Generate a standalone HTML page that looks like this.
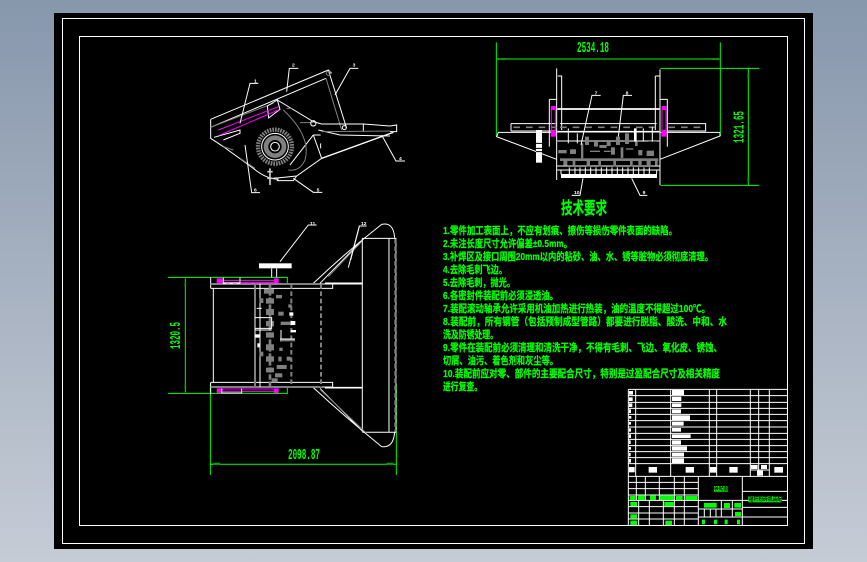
<!DOCTYPE html>
<html lang="zh">
<head>
<meta charset="utf-8">
<title>装配图</title>
<style>
html,body{margin:0;padding:0;width:867px;height:562px;overflow:hidden;background:linear-gradient(#8797ac,#c6ccd6)}
svg{position:absolute;left:0;top:0;display:block}
.w{fill:none;stroke:#fff;stroke-width:3}
.g{fill:none;stroke:#808080;stroke-width:3}
.gt{fill:none;stroke:#808080;stroke-width:6;stroke-dasharray:14 8}
.m{fill:none;stroke:#f0f;stroke-width:3}
.n{fill:none;stroke:#0f0;stroke-width:3}
.num{font:bold 15px "Liberation Sans",sans-serif;fill:#fff}
.t text{font-family:"Liberation Sans","Noto Sans CJK SC",sans-serif;font-size:10.5px;font-weight:bold;fill:#0f0;stroke:#0f0;stroke-width:.25}
.dim{font-family:"Liberation Mono",monospace;font-weight:bold;fill:#0f0;font-size:15px}
.tb text{font-family:"Liberation Sans","Noto Sans CJK SC",sans-serif;font-size:5.5px;font-weight:bold}
</style>
</head>
<body>
<svg width="867" height="562" viewBox="0 0 867 562" xmlns="http://www.w3.org/2000/svg">
<rect x="54" y="13" width="759" height="536" fill="#000"/>
<g fill="none" stroke="#fff" stroke-width="1" shape-rendering="crispEdges">
<rect x="62.5" y="18.5" width="742" height="525"/>
<rect x="79.5" y="36.5" width="708" height="489"/>
</g>

<!-- Side view -->
<g transform="translate(190,50) scale(.3333)">
<path class="w" d="M62 208L415 60L425 70M62 232L408 85M62 208V265L100 290L190 355Q225 385 262 388M415 60L470 235M72 262L150 240L150 250L100 270"/>
<path class="g" d="M408 85L455 240M62 232L250 160"/>
<path class="w" d="M262 150L370 215L395 222H520L600 228L620 225V245H600M520 222V245M385 240L450 255L600 258M232 168L262 150L270 178L236 204ZM610 247L395 325L320 378L250 385M370 255L300 345M370 255L395 325M370 255H392M392 280V295"/>
<path d="M395 325L610 247" stroke="#fff" stroke-width="4" fill="none"/>
<path class="g" d="M280 180Q365 260 345 330Q330 365 295 360M395 245L600 243M290 175H305M330 218H370M100 290L130 300M150 325L195 355"/>
<path class="m" d="M85 240L265 170M90 255L265 180"/>
<circle cx="370" cy="220" r="8" class="w"/><circle cx="463" cy="233" r="6" class="w"/><circle cx="415" cy="70" r="6" class="g"/>
<circle cx="255" cy="290" r="51" fill="none" stroke="#808080" stroke-width="13" stroke-dasharray="5 3"/>
<circle cx="255" cy="290" r="40" class="w"/>
<circle cx="255" cy="290" r="27" fill="none" stroke="#808080" stroke-width="14"/>
<circle cx="255" cy="290" r="13" class="w"/>
<path d="M240 355V405M232 365H248M232 385H248" stroke="#ccc" stroke-width="5" fill="none"/>
<path class="w" d="M250 385Q270 380 262 392H310L320 378"/>
<path class="w" d="M205 100H180L150 220M325 55H298L290 125M505 55H480L435 135M645 333H618L575 255M397 427H370L310 385M210 428H185L165 285"/>
<text class="num" x="192" y="97">1</text><text class="num" x="306" y="50">2</text><text class="num" x="488" y="50">3</text><text class="num" x="627" y="330">4</text><text class="num" x="380" y="424">5</text><text class="num" x="192" y="424">6</text>
</g>

<!-- Top right view -->
<g transform="translate(480,30) scale(.3333)">
<path class="n" d="M49 37V320M721 37V318M52 87H718M541 115H838M805 115V465M541 466H838"/>
<path d="M52 87H75M695 87H718M805 130V145M805 440V455" stroke="#0a0" stroke-width="5" fill="none"/>
<path class="w" d="M230 115V450M540 118V465M233 138H245V300M526 138H540M526 138V300M208 208H230M540 208H562V300M208 208V350M562 300V350M232 237H538M93 281H230M93 303H230M93 281V303M562 281H677V303H562M240 281H530M55 307H232M540 307H720M55 307L50 320L230 388M720 309V318L540 388M232 333H538M232 408H540M232 420H540M243 420V433M530 420V433"/>
<path d="M232 237H538M232 305H538" stroke="#fff" stroke-width="5"/>
<path d="M100 292H230M565 292H677M240 292H525" stroke="#808080" stroke-width="5" stroke-dasharray="20 18" fill="none"/>
<rect x="168" y="300" width="18" height="98" fill="#fff"/>
<path d="M168 340H186M168 355H186M168 365H186" stroke="#000" stroke-width="3"/>
<rect x="243" y="432" width="288" height="12" fill="#fff"/>
<path d="M268 412V432M285 412V432M300 412V432M316 412V432M332 412V432M348 412V432M364 412V432M380 412V432M396 412V432M412 412V432M428 412V432M444 412V432M460 412V432M476 412V432M492 412V432M508 412V432" stroke="#fff" stroke-width="3"/>
<g fill="#808080">
<rect x="235" y="360" width="25" height="10"/><rect x="240" y="385" width="295" height="8"/><rect x="270" y="358" width="18" height="14"/><rect x="303" y="340" width="7" height="45"/>
<rect x="315" y="320" width="12" height="25"/><rect x="342" y="330" width="12" height="20"/><rect x="358" y="345" width="22" height="9"/><rect x="380" y="330" width="12" height="18"/>
<rect x="408" y="320" width="12" height="25"/><rect x="435" y="310" width="12" height="32"/><rect x="393" y="352" width="12" height="22"/><rect x="330" y="362" width="30" height="4"/>
<rect x="372" y="362" width="20" height="4"/><rect x="422" y="352" width="8" height="32"/><rect x="438" y="355" width="22" height="4"/><rect x="475" y="360" width="12" height="16"/>
<rect x="500" y="362" width="22" height="16"/><rect x="465" y="330" width="8" height="18"/><rect x="505" y="330" width="25" height="5"/><rect x="250" y="390" width="12" height="16"/>
<rect x="278" y="388" width="8" height="20"/><rect x="320" y="388" width="10" height="22"/><rect x="355" y="388" width="8" height="22"/><rect x="400" y="388" width="8" height="22"/><rect x="450" y="388" width="8" height="22"/><rect x="475" y="390" width="10" height="15"/><rect x="500" y="392" width="12" height="16"/><rect x="525" y="388" width="8" height="18"/>
</g>
<path class="w" d="M265 295V340M292 310V340M490 295V335M517 290V335"/>
<rect x="462" y="295" width="8" height="40" fill="#fff"/>
<path class="m" d="M214 230V300M226 230V300M546 230V300M558 230V300"/>
<rect x="213" y="228" width="14" height="12" fill="#f0f"/><rect x="545" y="228" width="14" height="12" fill="#f0f"/>
<rect x="212" y="300" width="16" height="20" fill="#f0f"/><rect x="544" y="300" width="16" height="20" fill="#f0f"/>
<path class="w" d="M362 196H336L303 345M456 196H430L415 320M297 496H275M309 445L300 496H275M502 496H480L455 445"/>
<text class="num" x="344" y="193">7</text><text class="num" x="437" y="193">8</text><text class="num" x="282" y="492">10</text><text class="num" x="488" y="492">9</text>
</g>
<text class="dim" x="593" y="52" text-anchor="middle" textLength="32" lengthAdjust="spacingAndGlyphs">2534.18</text>
<text class="dim" transform="translate(743.5,127) rotate(-90)" text-anchor="middle" textLength="32" lengthAdjust="spacingAndGlyphs">1321.65</text>

<!-- Bottom-left view -->
<g transform="translate(160,215) scale(.3333)">
<path class="n" d="M24 187H382V205M24 535H382V515M76 190V532M151 505V780M709 510V780M151 748H709"/>
<path d="M76 205V215M76 510V520M160 746H180M680 746H700" stroke="#0a0" stroke-width="5" fill="none"/>
<path class="w" d="M160 220V502M152 207H518V220H152M152 502H518V516H152M152 187V220M152 502V538M285 207V516M300 207V516M607 70V650M687 70V650M607 70H708V652H607M460 205Q560 110 665 28Q700 20 704 68M460 518Q560 610 665 695Q700 700 704 652M480 205L607 75M480 520L607 648M495 207H607M495 518H607"/>
<path d="M495 205H607M495 518H607" stroke="#fff" stroke-width="5"/>
<path class="gt" d="M706 72V650"/>
<path class="gt" d="M285 207V516M394 207V516M483 207V516M152 207H480M152 516H480"/>
<path class="g" d="M505 185L605 80M482 525L620 655"/>
<path class="m" d="M172 196H355M172 203H355M172 522H355M172 530H355"/>
<rect x="170" y="190" width="18" height="14" fill="#f0f"/><rect x="342" y="190" width="14" height="14" fill="#f0f"/><rect x="170" y="520" width="18" height="14" fill="#f0f"/><rect x="342" y="520" width="14" height="14" fill="#f0f"/>
<path class="w" d="M190 188V204H240V188M185 520V534H245V520"/>
<rect x="297" y="145" width="98" height="15" fill="#fff"/>
<path class="w" d="M335 160V187M350 160V187"/>
<path d="M330 205V520" stroke="#808080" stroke-width="8" stroke-dasharray="16 5" fill="none"/>
<g fill="#808080">
<rect x="312" y="222" width="30" height="14"/><rect x="318" y="250" width="24" height="16"/><rect x="318" y="282" width="24" height="18"/><rect x="318" y="318" width="24" height="16"/><rect x="318" y="352" width="24" height="16"/>
<rect x="318" y="388" width="24" height="18"/><rect x="318" y="424" width="24" height="16"/><rect x="318" y="458" width="24" height="14"/><rect x="335" y="490" width="18" height="12"/>
<rect x="298" y="250" width="12" height="14"/><rect x="298" y="410" width="12" height="14"/><rect x="348" y="240" width="18" height="10"/><rect x="355" y="290" width="16" height="12"/><rect x="362" y="320" width="30" height="10"/>
<rect x="360" y="345" width="6" height="35"/><rect x="360" y="372" width="45" height="7"/><rect x="358" y="398" width="10" height="10"/><rect x="380" y="425" width="12" height="12"/><rect x="350" y="450" width="30" height="12"/><rect x="345" y="475" width="22" height="12"/><rect x="355" y="425" width="10" height="14"/><rect x="385" y="268" width="10" height="10"/>
</g>
<g fill="#fff"><rect x="388" y="292" width="12" height="10"/><rect x="392" y="318" width="14" height="12"/><rect x="392" y="345" width="16" height="7"/><rect x="285" y="358" width="14" height="10"/><rect x="292" y="385" width="8" height="12"/></g>
<path class="w" d="M285 308H335V340H285M285 345H335M290 280H305M360 372H405"/>
<path class="w" d="M470 30H445L360 140M620 33H598L565 158M598 35L572 135"/>
<text class="num" x="450" y="30">11</text><text class="num" x="603" y="30">12</text>
</g>
<text class="dim" transform="translate(180,335.5) rotate(-90)" text-anchor="middle" textLength="27" lengthAdjust="spacingAndGlyphs">1320.5</text>
<text class="dim" x="304" y="459" text-anchor="middle" textLength="32" lengthAdjust="spacingAndGlyphs">2098.87</text>

<!-- Heading and technical requirements -->
<g class="t">
<text x="561" y="214" textLength="46" lengthAdjust="spacingAndGlyphs" style="font-size:17px">技术要求</text>
<text x="443" y="234" textLength="234" lengthAdjust="spacingAndGlyphs">1.零件加工表面上，不应有划痕、擦伤等损伤零件表面的缺陷。</text>
<text x="443" y="247" textLength="129" lengthAdjust="spacingAndGlyphs">2.未注长度尺寸允许偏差±0.5mm。</text>
<text x="443" y="260" textLength="270" lengthAdjust="spacingAndGlyphs">3.补焊区及接口周围20mm以内的粘砂、油、水、锈等脏物必须彻底清理。</text>
<text x="443" y="273" textLength="64" lengthAdjust="spacingAndGlyphs">4.去除毛刺飞边。</text>
<text x="443" y="286" textLength="72" lengthAdjust="spacingAndGlyphs">5.去除毛刺，抛光。</text>
<text x="443" y="299" textLength="115" lengthAdjust="spacingAndGlyphs">6.各密封件装配前必须浸透油。</text>
<text x="443" y="312" textLength="267" lengthAdjust="spacingAndGlyphs">7.装配滚动轴承允许采用机油加热进行热装，油的温度不得超过100℃。</text>
<text x="443" y="325" textLength="284" lengthAdjust="spacingAndGlyphs">8.装配前，所有钢管（包括预制成型管路）都要进行脱脂、酸洗、中和、水</text>
<text x="443" y="338" textLength="55" lengthAdjust="spacingAndGlyphs">洗及防锈处理。</text>
<text x="443" y="351" textLength="279" lengthAdjust="spacingAndGlyphs">9.零件在装配前必须清理和清洗干净，不得有毛刺、飞边、氧化皮、锈蚀、</text>
<text x="443" y="364" textLength="115" lengthAdjust="spacingAndGlyphs">切屑、油污、着色剂和灰尘等。</text>
<text x="443" y="377" textLength="277" lengthAdjust="spacingAndGlyphs">10.装配前应对零、部件的主要配合尺寸，特别是过盈配合尺寸及相关精度</text>
<text x="443" y="390" textLength="39" lengthAdjust="spacingAndGlyphs">进行复查。</text>
</g>

<!-- Title block -->
<g transform="translate(620,385) scale(.3333)">
<path class="w" d="M25 13V421M25 13H502M25 32H502M25 52H502M25 70H502M25 88H502M25 107H502M25 126H502M25 145H502M25 163H502M25 182H502M25 200H502M25 218H502M25 236H502M25 274H502M47 13V274M152 13V274M268 13V274M290 13V274M391 13V274M416 13V274M448 13V274M391 255H448"/>
<path class="w" d="M25 292H235M25 311H235M25 330H235M25 346H502M25 365H235M25 384H235M25 402H235M49 274V346M76 274V346M118 274V346M163 274V346M193 274V346M235 274V421M56 346V421M88 346V421M130 346V421M163 346V421M193 346V421"/>
<path class="w" d="M235 372H367M235 396H502M304 346V396M337 346V396M253 372V396M271 372V396M288 372V396M367 274V421M367 319H502M367 367H502"/>
<g fill="#fff">
<rect x="27" y="18" width="12" height="11"/><rect x="27" y="37" width="11" height="11"/><rect x="27" y="55" width="10" height="11"/><rect x="27" y="73" width="6" height="11"/><rect x="27" y="93" width="7" height="8"/><rect x="27" y="111" width="6" height="8"/><rect x="27" y="130" width="6" height="10"/><rect x="27" y="148" width="6" height="11"/><rect x="27" y="166" width="5" height="11"/><rect x="27" y="186" width="6" height="8"/><rect x="27" y="204" width="5" height="10"/><rect x="27" y="222" width="6" height="11"/>
<rect x="156" y="15" width="36" height="15"/><rect x="156" y="35" width="28" height="13"/><rect x="156" y="55" width="28" height="11"/><rect x="156" y="73" width="27" height="12"/><rect x="156" y="91" width="54" height="14"/><rect x="156" y="110" width="35" height="12"/><rect x="156" y="129" width="27" height="11"/><rect x="156" y="148" width="56" height="11"/><rect x="156" y="166" width="27" height="13"/><rect x="156" y="184" width="45" height="13"/><rect x="156" y="203" width="36" height="12"/><rect x="156" y="220" width="36" height="14"/>
<rect x="27" y="246" width="17" height="16"/><rect x="86" y="246" width="25" height="17"/><rect x="197" y="246" width="25" height="17"/><rect x="270" y="246" width="19" height="17"/><rect x="328" y="246" width="25" height="17"/><rect x="393" y="240" width="20" height="12"/><rect x="423" y="240" width="18" height="12"/><rect x="411" y="257" width="18" height="15"/><rect x="463" y="246" width="26" height="17"/>
</g>
<g fill="#0f0">
<rect x="29" y="333" width="18" height="12"/><rect x="54" y="331" width="20" height="14"/><rect x="90" y="331" width="18" height="14"/><rect x="120" y="331" width="42" height="14"/><rect x="168" y="333" width="20" height="12"/><rect x="196" y="333" width="36" height="12"/>
<rect x="31" y="351" width="20" height="12"/><rect x="133" y="351" width="28" height="13"/><rect x="31" y="388" width="20" height="12"/><rect x="31" y="407" width="20" height="13"/><rect x="136" y="407" width="20" height="13"/>
<rect x="282" y="303" width="42" height="17"/><rect x="385" y="334" width="100" height="18"/><rect x="252" y="354" width="38" height="14"/><rect x="312" y="354" width="18" height="15"/><rect x="343" y="354" width="20" height="14"/><rect x="345" y="381" width="18" height="12"/><rect x="246" y="404" width="9" height="14"/><rect x="282" y="404" width="9" height="14"/><rect x="314" y="404" width="9" height="14"/><rect x="351" y="404" width="9" height="14"/>
</g>
</g>
<g class="tb">
<text x="714" y="490" fill="#000" textLength="14" lengthAdjust="spacingAndGlyphs">装配图</text>
<text x="749" y="501" fill="#000" textLength="33" lengthAdjust="spacingAndGlyphs">秸秆粉碎机装配</text>
</g>
</svg>
</body>
</html>
